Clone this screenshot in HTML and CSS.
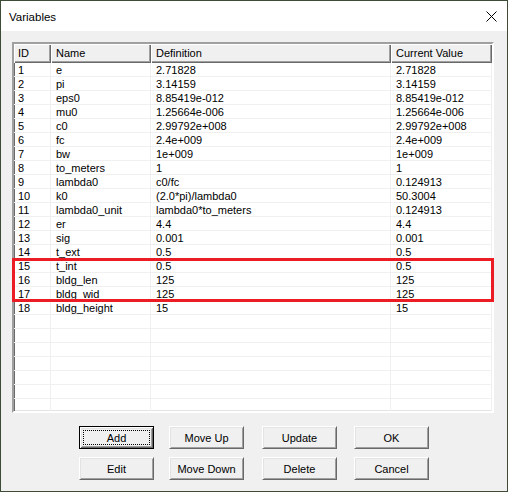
FILE: index.html
```html
<!DOCTYPE html>
<html>
<head>
<meta charset="utf-8">
<link rel="stylesheet" href="styles.css">
</head>
<body>
<div class="window">
  <div class="titlebar">
    <span class="title">Variables</span>
    <svg class="close" width="11" height="11" viewBox="0 0 11 11"><path d="M0.5 0.5 L10.5 10.5 M10.5 0.5 L0.5 10.5" stroke="#000" stroke-width="1" fill="none"/></svg>
  </div>
  <div class="client">
    <div class="list">
      <div class="header">
        <div class="hcell c-id">ID</div>
        <div class="hcell c-name">Name</div>
        <div class="hcell c-def">Definition</div>
        <div class="hcell c-val">Current Value</div>
      </div>
      <div class="rows">
        <div class="row"><div class="cell c-id">1</div><div class="cell c-name">e</div><div class="cell c-def">2.71828</div><div class="cell c-val">2.71828</div></div>
        <div class="row"><div class="cell c-id">2</div><div class="cell c-name">pi</div><div class="cell c-def">3.14159</div><div class="cell c-val">3.14159</div></div>
        <div class="row"><div class="cell c-id">3</div><div class="cell c-name">eps0</div><div class="cell c-def">8.85419e-012</div><div class="cell c-val">8.85419e-012</div></div>
        <div class="row"><div class="cell c-id">4</div><div class="cell c-name">mu0</div><div class="cell c-def">1.25664e-006</div><div class="cell c-val">1.25664e-006</div></div>
        <div class="row"><div class="cell c-id">5</div><div class="cell c-name">c0</div><div class="cell c-def">2.99792e+008</div><div class="cell c-val">2.99792e+008</div></div>
        <div class="row"><div class="cell c-id">6</div><div class="cell c-name">fc</div><div class="cell c-def">2.4e+009</div><div class="cell c-val">2.4e+009</div></div>
        <div class="row"><div class="cell c-id">7</div><div class="cell c-name">bw</div><div class="cell c-def">1e+009</div><div class="cell c-val">1e+009</div></div>
        <div class="row"><div class="cell c-id">8</div><div class="cell c-name">to_meters</div><div class="cell c-def">1</div><div class="cell c-val">1</div></div>
        <div class="row"><div class="cell c-id">9</div><div class="cell c-name">lambda0</div><div class="cell c-def">c0/fc</div><div class="cell c-val">0.124913</div></div>
        <div class="row"><div class="cell c-id">10</div><div class="cell c-name">k0</div><div class="cell c-def">(2.0*pi)/lambda0</div><div class="cell c-val">50.3004</div></div>
        <div class="row"><div class="cell c-id">11</div><div class="cell c-name">lambda0_unit</div><div class="cell c-def">lambda0*to_meters</div><div class="cell c-val">0.124913</div></div>
        <div class="row"><div class="cell c-id">12</div><div class="cell c-name">er</div><div class="cell c-def">4.4</div><div class="cell c-val">4.4</div></div>
        <div class="row"><div class="cell c-id">13</div><div class="cell c-name">sig</div><div class="cell c-def">0.001</div><div class="cell c-val">0.001</div></div>
        <div class="row"><div class="cell c-id">14</div><div class="cell c-name">t_ext</div><div class="cell c-def">0.5</div><div class="cell c-val">0.5</div></div>
        <div class="row"><div class="cell c-id">15</div><div class="cell c-name">t_int</div><div class="cell c-def">0.5</div><div class="cell c-val">0.5</div></div>
        <div class="row"><div class="cell c-id">16</div><div class="cell c-name">bldg_len</div><div class="cell c-def">125</div><div class="cell c-val">125</div></div>
        <div class="row"><div class="cell c-id">17</div><div class="cell c-name">bldg_wid</div><div class="cell c-def">125</div><div class="cell c-val">125</div></div>
        <div class="row"><div class="cell c-id">18</div><div class="cell c-name">bldg_height</div><div class="cell c-def">15</div><div class="cell c-val">15</div></div>
        <div class="row"><div class="cell c-id"></div><div class="cell c-name"></div><div class="cell c-def"></div><div class="cell c-val"></div></div>
        <div class="row"><div class="cell c-id"></div><div class="cell c-name"></div><div class="cell c-def"></div><div class="cell c-val"></div></div>
        <div class="row"><div class="cell c-id"></div><div class="cell c-name"></div><div class="cell c-def"></div><div class="cell c-val"></div></div>
        <div class="row"><div class="cell c-id"></div><div class="cell c-name"></div><div class="cell c-def"></div><div class="cell c-val"></div></div>
        <div class="row"><div class="cell c-id"></div><div class="cell c-name"></div><div class="cell c-def"></div><div class="cell c-val"></div></div>
        <div class="row"><div class="cell c-id"></div><div class="cell c-name"></div><div class="cell c-def"></div><div class="cell c-val"></div></div>
        <div class="row"><div class="cell c-id"></div><div class="cell c-name"></div><div class="cell c-def"></div><div class="cell c-val"></div></div>
      </div>
      <div class="highlight"></div>
    </div>
    <div class="buttons">
      <div class="btn-row">
        <button class="btn default"><span class="focus">Add</span></button>
        <button class="btn g2">Move Up</button>
        <button class="btn g3">Update</button>
        <button class="btn g4">OK</button>
      </div>
      <div class="btn-row">
        <button class="btn">Edit</button>
        <button class="btn g2">Move Down</button>
        <button class="btn g3">Delete</button>
        <button class="btn g4">Cancel</button>
      </div>
    </div>
  </div>
</div>
</body>
</html>
```

FILE: styles.css
```css
html, body {
  margin: 0;
  padding: 0;
  background: #3e4b37;
}
.window {
  width: 508px;
  height: 492px;
  box-sizing: border-box;
  border: 1px solid #3e4b37;
  background: #f0f0f0;
  display: flex;
  flex-direction: column;
  overflow: hidden;
}
.titlebar {
  height: 30px;
  flex: none;
  background: #ffffff;
  display: flex;
  align-items: center;
  justify-content: space-between;
  padding: 0 10px 0 8px;
}
.title {
  font-family: "Liberation Sans", Arial, sans-serif;
  font-size: 11.5px;
  color: #000;
  margin-top: 1px;
}
.close {
  display: block;
  margin-top: 1px;
}
.client {
  flex: 1;
  padding: 11px 0 0 11px;
}
.list {
  position: relative;
  width: 482px;
  height: 371px;
  box-sizing: border-box;
  border: 2px solid;
  border-color: #a0a0a0 #ffffff #ffffff #a0a0a0;
  background: #ffffff;
  box-shadow: inset 1px 1px 0 #696969, inset -1px -1px 0 #e3e3e3;
  overflow: visible;
  font-family: "Liberation Sans", Arial, sans-serif;
  font-size: 11px;
  color: #000;
}
.header {
  display: flex;
  height: 19px;
}
.hcell {
  box-sizing: border-box;
  height: 19px;
  line-height: 18px;
  background: #f0f0f0;
  box-shadow: inset 1px 1px 0 #ffffff, inset -1px -1px 0 #696969, inset -2px -2px 0 #a0a0a0;
  padding-left: 5px;
  white-space: nowrap;
  overflow: hidden;
}
.c-id { width: 37px; }
.c-name { width: 100px; }
.c-def { width: 240px; }
.c-val { width: 101px; }
.header .c-id { padding-left: 4px; }
.rows {
  height: 348px;
  overflow: hidden;
}
.row {
  display: flex;
  height: 14px;
  box-sizing: border-box;
  border-bottom: 1px solid #f0f0f0;
}
.cell {
  box-sizing: border-box;
  height: 13px;
  line-height: 14px;
  border-right: 1px solid #f0f0f0;
  padding-left: 5px;
  white-space: nowrap;
  overflow: hidden;
}
.row .c-id { padding-left: 4px; }
.highlight {
  position: absolute;
  left: -2px;
  top: 214px;
  width: 482px;
  height: 44px;
  box-sizing: border-box;
  border: 3px solid #ec1c24;
}
.buttons {
  margin-top: 13px;
  padding-left: 67px;
  display: flex;
  flex-direction: column;
  gap: 8px;
}
.btn-row {
  display: flex;
}
.btn {
  width: 75px;
  height: 23px;
  box-sizing: border-box;
  margin: 0;
  padding: 0;
  background: #f0f0f0;
  border: 1px solid;
  border-color: #ffffff #696969 #696969 #ffffff;
  box-shadow: inset 1px 1px 0 #e3e3e3, inset -1px -1px 0 #a0a0a0;
  font-family: "Liberation Sans", Arial, sans-serif;
  font-size: 11px;
  color: #000;
  display: flex;
  align-items: center;
  justify-content: center;
}
.btn.default {
  border: 1px solid #000;
  box-shadow: inset 1px 1px 0 #ffffff, inset -1px -1px 0 #696969, inset 2px 2px 0 #e3e3e3, inset -2px -2px 0 #a0a0a0;
  padding: 3px;
}
.focus {
  flex: 1;
  align-self: stretch;
  display: flex;
  align-items: center;
  justify-content: center;
  border: 1px dotted #000;
}
.g2 { margin-left: 15px; }
.g3 { margin-left: 18px; }
.g4 { margin-left: 17px; }
```
